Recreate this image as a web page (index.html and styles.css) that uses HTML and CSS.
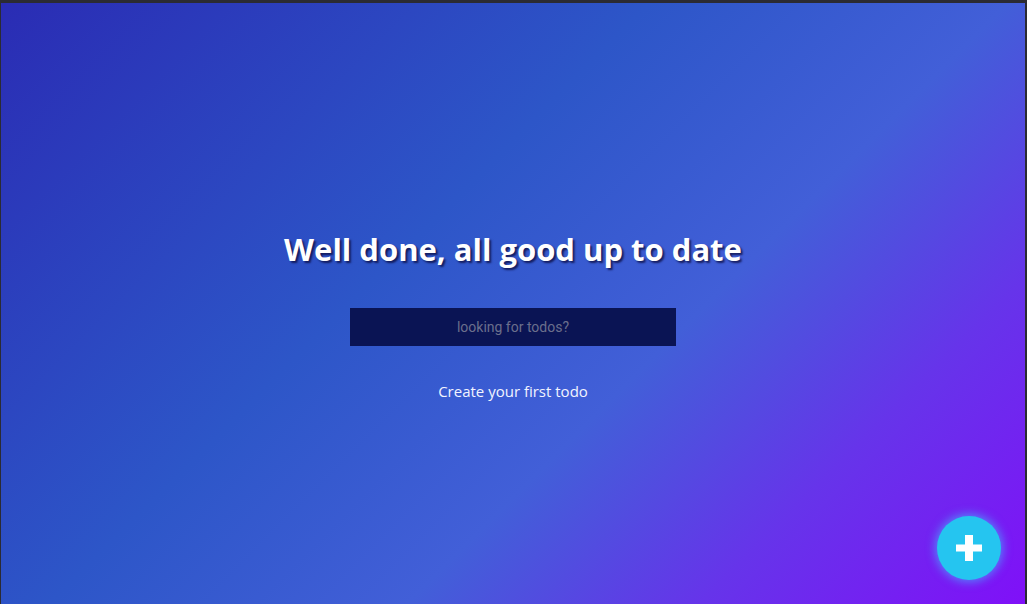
FILE: index.html
```html
<!DOCTYPE html>
<html lang="en">
<head>
<meta charset="utf-8">
<title>Todos</title>
<link rel="stylesheet" href="styles.css">
</head>
<body>
<div class="frame">
  <main class="app">
    <h1 class="title">Well done, all good up to date</h1>
    <input class="search" type="text" placeholder="looking for todos?">
    <p class="hint">Create your first todo</p>
  </main>
  <button class="fab" aria-label="Add todo">
    <svg width="26" height="26" viewBox="0 0 26 26"><rect x="9" y="0" width="8" height="26" fill="#fff"/><rect x="0" y="9.5" width="26" height="7" fill="#fff"/></svg>
  </button>
</div>
</body>
</html>
```
FILE: styles.css
```css
* { box-sizing: border-box; }
html, body { margin: 0; height: 100%; }
body {
  background: #2c2c34;
  font-family: "Open Sans", "Noto Sans", sans-serif;
}
.frame {
  position: relative;
  height: 604px;
  border-top: 3px solid #2b2b33;
  border-left: 1px solid #2b2b33;
  border-right: 2px solid #2b2b33;
  background: linear-gradient(135deg, #2a2cb4 0%, #2d56c8 40%, #425fd8 62%, #6634ea 80%, #8010f8 100%);
  overflow: hidden;
}
.app {
  display: flex;
  flex-direction: column;
  align-items: center;
  padding-top: 226px;
}
.title {
  margin: 0;
  font-size: 31px;
  line-height: 40px;
  font-weight: 700;
  color: #fff;
  text-shadow: 2px 2px 2px rgba(10, 10, 60, 0.75);
}
.search {
  margin-top: 39px;
  width: 326px;
  height: 38px;
  border: none;
  outline: none;
  background: #0a1454;
  color: #fff;
  text-align: center;
  font-family: Roboto, sans-serif;
  font-size: 14px;
}
.search::placeholder { color: #6b6f8c; }
.hint {
  margin: 35px 0 0;
  font-size: 15px;
  line-height: 20px;
  color: #f2f4ff;
}
.fab {
  position: absolute;
  right: 24px;
  bottom: 24px;
  width: 64px;
  height: 64px;
  border-radius: 50%;
  border: none;
  background: #25c5f0;
  box-shadow: 0 0 10px 2px rgba(60, 200, 255, 0.6);
  display: flex;
  align-items: center;
  justify-content: center;
  padding: 0;
}
```
